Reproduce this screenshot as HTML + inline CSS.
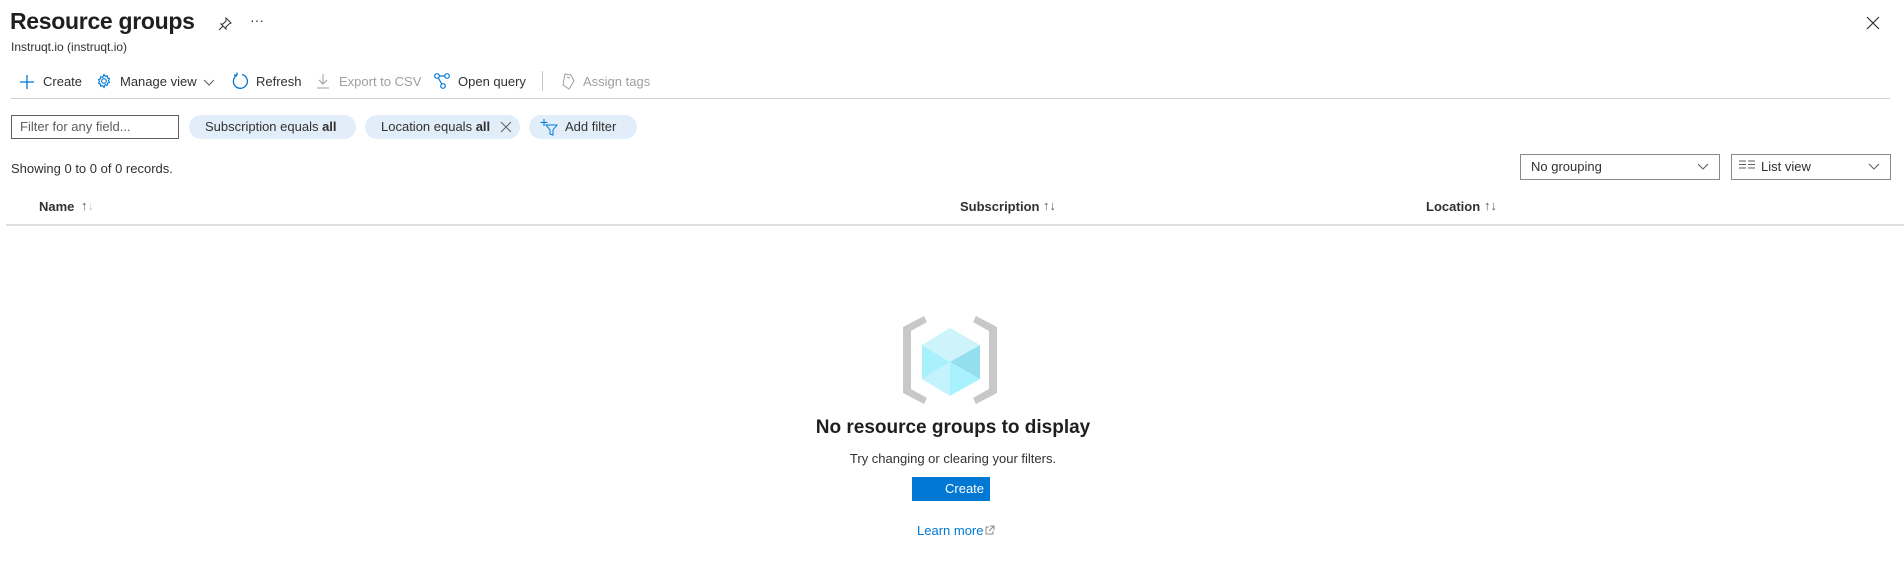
<!DOCTYPE html>
<html><head><meta charset="utf-8"><style>
*{margin:0;padding:0;box-sizing:border-box}
body{width:1904px;height:575px;background:#fff;font-family:"Liberation Sans",sans-serif;color:#323130;position:relative;overflow:hidden}
.a{position:absolute;white-space:nowrap}
.t{font-size:13px}
.pill{position:absolute;top:115px;height:24px;border-radius:12px;background:#e1eefa;font-size:13px;line-height:24px;padding-left:16px}
.dd{position:absolute;top:154px;height:26px;border:1px solid #8a8886;font-size:13px;line-height:24px;padding-left:10px}
.h{font-size:13px;font-weight:bold;top:199px}
</style></head><body>
<div class="a" style="left:10px;top:8px;font-size:23px;font-weight:bold;color:#201f1e;letter-spacing:-0.3px">Resource groups</div>
<div class="a" style="left:11px;top:40px;font-size:12px">Instruqt.io (instruqt.io)</div>
<svg class="a" style="left:217px;top:16px" width="16" height="16" viewBox="0 0 16 16" fill="none" stroke="#323130" stroke-width="1"><path d="M9 2l5 5-2 1-3 3 0 2-5-5 2 0 3-3z M6 10l-4 4"/></svg>
<div class="a" style="left:250px;top:12px;font-size:14px">···</div>
<svg class="a" style="left:1866px;top:16px" width="14" height="14" stroke="#323130" stroke-width="1.2"><path d="M1 1L13 13M13 1L1 13"/></svg>

<svg class="a" style="left:19px;top:74px" width="16" height="16" stroke="#0078d4" stroke-width="1.3"><path d="M8 1v14M1 8h14"/></svg>
<div class="a t" style="left:43px;top:74px">Create</div>
<svg class="a" style="left:96px;top:73px" width="16" height="16" viewBox="0 0 16 16" fill="none" stroke="#0078d4" stroke-width="1.1"><circle cx="8" cy="8" r="2.3"/><path d="M8 1.5l1.2 1.8 2-.6.3 2.1 2 .8-1 1.9 1 1.9-2 .8-.3 2.1-2-.6L8 14.5l-1.2-1.8-2 .6-.3-2.1-2-.8 1-1.9-1-1.9 2-.8.3-2.1 2 .6z"/></svg>
<div class="a t" style="left:120px;top:74px">Manage view</div>
<svg class="a" style="left:203px;top:79px" width="12" height="8" fill="none" stroke="#605e5c"><path d="M1 1l5 5 5-5"/></svg>
<svg class="a" style="left:231px;top:72px" width="18" height="18" fill="none" stroke="#0078d4" stroke-width="1.3"><path d="M6 3.2A7 7 0 1 0 11 2.5M6 3.2V0.5M6 3.2H3"/></svg>
<div class="a t" style="left:256px;top:74px">Refresh</div>
<svg class="a" style="left:316px;top:73px" width="14" height="16" stroke="#a19f9d" fill="none"><path d="M7 1v10M3 7l4 4 4-4M1 15h12"/></svg>
<div class="a t" style="left:339px;top:74px;color:#a19f9d">Export to CSV</div>
<svg class="a" style="left:433px;top:72px" width="18" height="18" fill="none" stroke="#0078d4" stroke-width="1.2"><circle cx="4" cy="4" r="2.3"/><circle cx="14" cy="4" r="2.3"/><circle cx="10" cy="14" r="2.3"/><path d="M6.3 4h5.4M5.3 6l3.5 6"/></svg>
<div class="a t" style="left:458px;top:74px">Open query</div>
<div class="a" style="left:542px;top:71px;width:1px;height:20px;background:#c8c6c4"></div>
<svg class="a" style="left:560px;top:72px" width="16" height="18" fill="none" stroke="#a19f9d"><path d="M5 2l6 1 3 6-5 8-6-4z M7 5l3 1"/></svg>
<div class="a t" style="left:583px;top:74px;color:#a19f9d">Assign tags</div>
<div class="a" style="left:11px;top:98px;width:1879px;height:1px;background:#d2d0ce"></div>

<div class="a" style="left:11px;top:115px;width:168px;height:24px;border:1px solid #605e5c;font-size:13px;line-height:22px;padding-left:8px;color:#605e5c">Filter for any field...</div>
<div class="pill" style="left:189px;width:167px">Subscription equals <b>all</b></div>
<div class="pill" style="left:365px;width:155px">Location equals <b>all</b></div>
<svg class="a" style="left:500px;top:121px" width="12" height="12" stroke="#605e5c"><path d="M1 1l10 10M11 1L1 11"/></svg>
<div class="pill" style="left:529px;width:108px;padding-left:36px">Add filter</div>
<svg class="a" style="left:540px;top:118px" width="18" height="18" fill="none" stroke="#0078d4"><path d="M4 1v7M0.5 4.5h7M6 7h11l-4 5v5l-3-1v-4z"/></svg>

<div class="a t" style="left:11px;top:161px">Showing 0 to 0 of 0 records.</div>
<div class="dd" style="left:1520px;width:200px">No grouping</div>
<svg class="a" style="left:1697px;top:163px" width="12" height="8" fill="none" stroke="#605e5c"><path d="M1 1l5 5 5-5"/></svg>
<div class="dd" style="left:1731px;width:160px;padding-left:29px">List view</div>
<svg class="a" style="left:1739px;top:160px" width="18" height="10" stroke="#605e5c"><path d="M0 1h7M0 4.5h7M0 8h7M9 1h7M9 4.5h7M9 8h7"/></svg>
<svg class="a" style="left:1868px;top:163px" width="12" height="8" fill="none" stroke="#605e5c"><path d="M1 1l5 5 5-5"/></svg>

<div class="a h" style="left:39px">Name</div>
<div class="a" style="left:81px;top:198px;font-size:13px;color:#605e5c">↑<span style="color:#c8c6c4">↓</span></div>
<div class="a h" style="left:960px">Subscription</div>
<div class="a" style="left:1043px;top:198px;font-size:13px;color:#605e5c">↑↓</div>
<div class="a h" style="left:1426px">Location</div>
<div class="a" style="left:1484px;top:198px;font-size:13px;color:#605e5c">↑↓</div>
<div class="a" style="left:6px;top:224px;width:1898px;height:2px;background:#e1dfdd"></div>

<svg class="a" style="left:880px;top:310px" width="140" height="110" viewBox="0 0 140 110">
<path d="M23 17L44 6 47 12 31 21V79L47 88 44 94 23 83Z" fill="#c8c8c8"/>
<path d="M117 17L96 6 93 12 109 21V79L93 88 96 94 117 83Z" fill="#c8c8c8"/>
<path d="M70 18L100 35 70 52 42 35Z" fill="#cdf3fb"/>
<path d="M42 35L70 52 42 69Z" fill="#a9f0fd"/>
<path d="M100 35L70 52 100 69Z" fill="#93dfee"/>
<path d="M42 69L70 52 70 86Z" fill="#c4f3fd"/>
<path d="M70 52L100 69 70 86Z" fill="#a8f1fe"/>
</svg>
<div class="a" style="left:0;width:1904px;text-align:center;top:417px;font-size:19px;font-weight:bold;color:#201f1e;padding-left:2px">No resource groups to display</div>
<div class="a" style="left:0;width:1904px;text-align:center;top:451px;font-size:13px;padding-left:2px">Try changing or clearing your filters.</div>
<div class="a" style="left:912px;top:477px;width:78px;height:24px;background:#0078d4;color:#fff;font-size:13px;line-height:24px;padding-left:33px">Create</div>
<div class="a" style="left:917px;top:523px;font-size:13px;color:#0078d4">Learn more</div>
<svg class="a" style="left:985px;top:525px" width="10" height="10" fill="none" stroke="#8a8886"><path d="M5 1h4v4M9 1L4 6M4 2H1v7h7V6"/></svg>
</body></html>
